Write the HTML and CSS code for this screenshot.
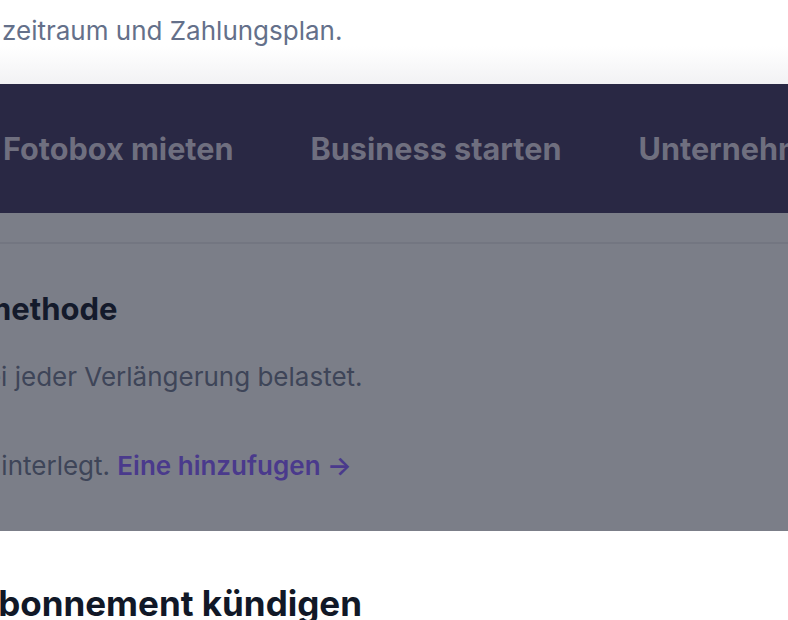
FILE: index.html
```html
<!DOCTYPE html>
<html lang="de">
<head>
<meta charset="UTF-8">
<title>Abonnement verwalten</title>
<link rel="stylesheet" href="styles.css">
</head>
<body>

<div class="intro">
    <p class="intro-text">zeitraum und Zahlungsplan.</p>
</div>

<nav class="topnav">
    <a class="nav-link" href="#">Fotobox mieten</a>
    <a class="nav-link" href="#">Business starten</a>
    <a class="nav-link" href="#">Unternehmen</a>
</nav>

<div class="dimmed">
    <div class="divider"></div>
    <div class="payment">
        <h2 class="payment-title">methode</h2>
        <p class="payment-note">bei jeder Verlängerung belastet.</p>
        <p class="payment-empty">hinterlegt. <a class="add-link" href="#">Eine hinzufugen →</a></p>
    </div>
</div>

<div class="cancel">
    <h2 class="cancel-title">Abonnement kündigen</h2>
</div>

</body>
</html>
```

FILE: styles.css
```css
html, body {
    margin: 0;
    padding: 0;
}

body {
    font-family: Inter, "Noto Sans", sans-serif;
    background: #fff;
    overflow: hidden;
    width: 788px;
    height: 620px;
}

.intro {
    height: 84px;
    box-sizing: border-box;
    padding-top: 16px;
    background: linear-gradient(to bottom, #ffffff 0%, #ffffff 55%, #f2f2f4 100%);
}

.intro-text {
    margin: 0 0 0 2px;
    font-size: 26px;
    line-height: 30px;
    color: #64708a;
    white-space: nowrap;
}

.topnav {
    height: 129px;
    background: #292844;
    display: flex;
    align-items: center;
    gap: 77px;
    padding-left: 3px;
    white-space: nowrap;
    overflow: hidden;
}

.nav-link {
    flex-shrink: 0;
    font-size: 30.6px;
    font-weight: 700;
    color: #6f6f7f;
    text-decoration: none;
}

.dimmed {
    background: #7b7e88;
    padding-top: 29px;
    height: 318px;
    box-sizing: border-box;
}

.divider {
    height: 2px;
    background: #737681;
}

.payment {
    padding-top: 46px;
    white-space: nowrap;
}

.payment-title {
    margin: 0 0 0 -17px;
    font-size: 31px;
    line-height: 38px;
    font-weight: 700;
    color: #141a2b;
}

.payment-note {
    margin: 33px 0 0 -30px;
    font-size: 26px;
    line-height: 32px;
    color: #3e4558;
}

.payment-empty {
    margin: 57px 0 0 -14px;
    font-size: 26px;
    line-height: 32px;
    color: #3e4558;
}

.add-link {
    color: #4a3a8c;
    font-weight: 600;
    text-decoration: none;
}

.cancel {
    padding-top: 51px;
}

.cancel-title {
    margin: 0 0 0 -28px;
    font-size: 35px;
    line-height: 42px;
    font-weight: 700;
    color: #111827;
    white-space: nowrap;
}
```
